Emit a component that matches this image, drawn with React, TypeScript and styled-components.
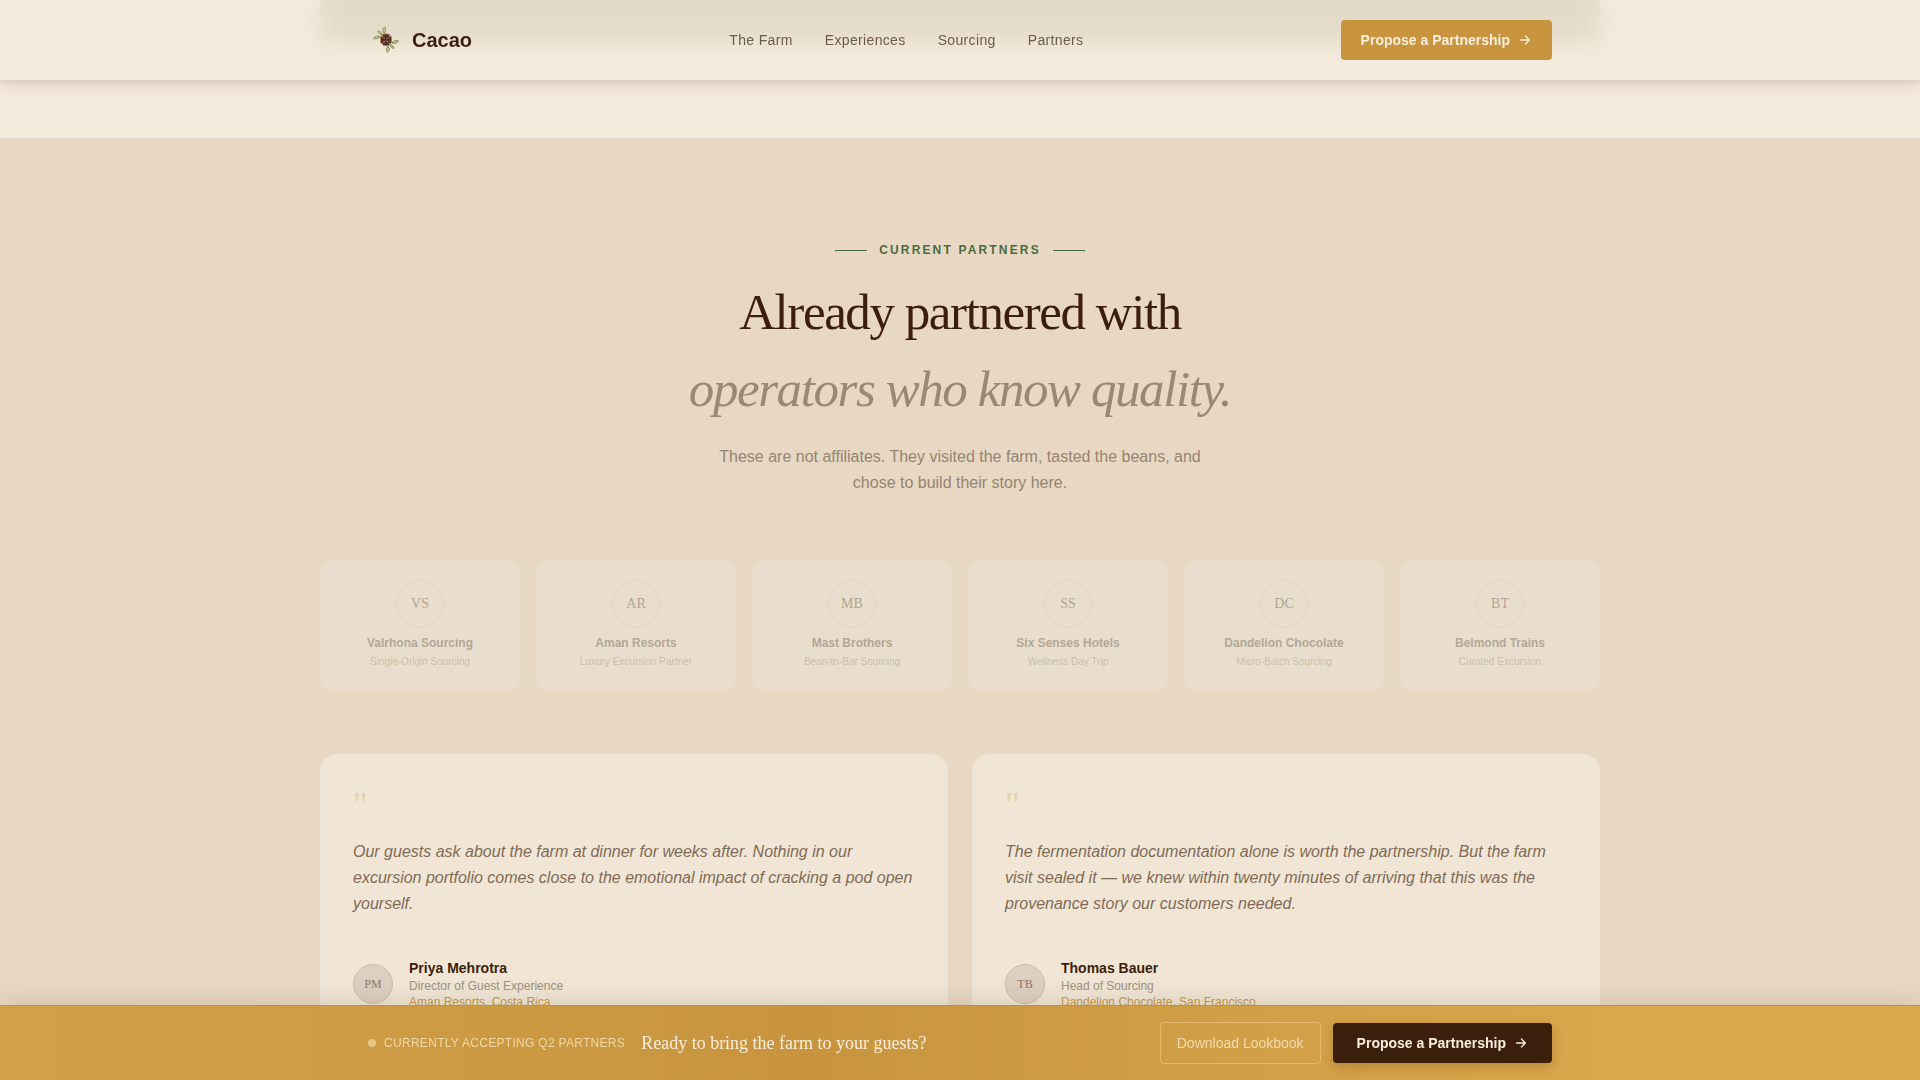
import React from "react";
import styled, { createGlobalStyle } from "styled-components";

const sans = '"Liberation Sans", Arial, sans-serif';
const serif = '"Liberation Serif", "Times New Roman", serif';

const GlobalStyle = createGlobalStyle`
  *, *::before, *::after { box-sizing: border-box; }
  html { scrollbar-width: none; }
  body {
    margin: 0;
    background: #f4eadc;
    color: #3b1f0c;
    font-family: ${sans};
  }
  h2, p, figure, blockquote, ul { margin: 0; padding: 0; }
  a { color: inherit; text-decoration: none; }
`;

const Header = styled.header`
  position: fixed;
  top: 0;
  left: 0;
  right: 0;
  z-index: 10;
  background: rgba(244, 235, 220, 0.8);
  backdrop-filter: blur(12px);
  border-bottom: 1px solid #e0d6c8;
  box-shadow: 0 2px 4px rgba(59, 31, 12, 0.08), 0 4px 16px rgba(59, 31, 12, 0.1);
`;

const Container = styled.div`
  max-width: 1280px;
  margin: 0 auto;
  padding: 0 48px;
`;

const HeaderRow = styled(Container)`
  display: flex;
  align-items: center;
  justify-content: space-between;
  height: 80px;
`;

const Brand = styled.a`
  display: flex;
  align-items: center;
  gap: 8px;
  font-size: 20px;
  font-weight: 700;
`;

const NavLinks = styled.nav`
  display: flex;
  gap: 32px;
  font-size: 14px;
  letter-spacing: 0.025em;
  color: #6d5a49;
`;

const Button = styled.button<{ $tone: "gold" | "dark" | "outline" }>`
  display: inline-flex;
  align-items: center;
  gap: 8px;
  height: ${(p) => (p.$tone === "outline" ? 42 : 40)}px;
  padding: 0 ${(p) => ({ gold: 20, dark: 24, outline: 16 })[p.$tone]}px;
  border: ${(p) => (p.$tone === "outline" ? "1px solid rgba(250, 225, 175, 0.4)" : "0")};
  border-radius: 4px;
  background: ${(p) => ({ gold: "#c8953e", dark: "#3b1f0c", outline: "transparent" })[p.$tone]};
  box-shadow: ${(p) => (p.$tone === "dark" ? "0 4px 12px rgba(59, 31, 12, 0.2)" : "none")};
  color: ${(p) => (p.$tone === "outline" ? "#f2dbb0" : "#f8eedd")};
  font-family: inherit;
  font-size: 14px;
  font-weight: ${(p) => (p.$tone === "outline" ? 400 : 700)};
  white-space: nowrap;
  cursor: pointer;
`;

const Intro = styled.section`
  padding: 0 24px 96px;
`;

const IntroPanel = styled.div`
  max-width: 1280px;
  height: 42px;
  margin: 0 auto;
  background: #a3957f;
`;

const Partners = styled.section`
  padding: 96px 24px 32px;
  background: #e8d8c3;
`;

const Inner = styled.div`
  max-width: 1280px;
  margin: 0 auto;
`;

const Eyebrow = styled.p`
  display: flex;
  align-items: center;
  justify-content: center;
  gap: 12px;
  font-size: 12px;
  line-height: 32px;
  font-weight: 700;
  letter-spacing: 0.18em;
  text-transform: uppercase;
  color: #4a6b3d;

  &::before,
  &::after {
    content: "";
    width: 32px;
    height: 1px;
    background: currentColor;
  }
`;

const Title = styled.h2`
  margin-top: 8px;
  font-family: ${serif};
  font-size: 51px;
  line-height: 77px;
  font-weight: 400;
  letter-spacing: -0.028em;
  text-align: center;

  em {
    display: block;
    color: #9b8870;
  }
`;

const Lead = styled.p`
  max-width: 520px;
  margin: 16px auto 0;
  font-size: 16px;
  line-height: 26px;
  text-align: center;
  color: #958470;
`;

const PartnerGrid = styled.ul`
  display: grid;
  grid-template-columns: repeat(6, 1fr);
  gap: 16px;
  margin-top: 64px;
  list-style: none;
`;

const PartnerCard = styled.li`
  display: flex;
  flex-direction: column;
  align-items: center;
  padding: 20px 16px;
  border-radius: 12px;
  background: #e9decd;
  box-shadow: 0 0 4px rgba(233, 222, 205, 0.8);
  text-align: center;
`;

const Monogram = styled.span`
  display: grid;
  place-items: center;
  width: 48px;
  height: 48px;
  border: 1px solid #e2d6c5;
  border-radius: 50%;
  font-family: ${serif};
  font-size: 14px;
  color: #b1a594;
`;

const PartnerName = styled.strong`
  margin-top: 6px;
  font-size: 12px;
  line-height: 18px;
  color: #b3a796;
`;

const PartnerKind = styled.span`
  margin-top: 2px;
  font-size: 10px;
  line-height: 16px;
  color: #cabeac;
`;

const Quotes = styled.div`
  display: grid;
  grid-template-columns: repeat(2, 1fr);
  gap: 24px;
  margin-top: 64px;
`;

const QuoteCard = styled.figure`
  padding: 32px;
  border: 1px solid #ebe4dc;
  border-radius: 16px;
  background: #f1e6d5;
`;

const QuoteMark = styled.div`
  font-family: ${serif};
  font-size: 36px;
  line-height: 36px;
  color: #e6d3a8;
`;

const QuoteText = styled.blockquote`
  margin-top: 16px;
  font-size: 16px;
  line-height: 26px;
  font-style: italic;
  color: #7f6b57;
`;

const Author = styled.figcaption`
  display: flex;
  align-items: center;
  gap: 16px;
  margin-top: 24px;
  padding-top: 16px;
  border-top: 1px solid #ebe3df;
`;

const Avatar = styled.span`
  display: grid;
  place-items: center;
  width: 40px;
  height: 40px;
  border: 1px solid #cabdad;
  border-radius: 50%;
  background: #ddd0c0;
  font-family: ${serif};
  font-size: 12px;
  color: #8c7a68;
`;

const AuthorText = styled.div`
  display: flex;
  flex-direction: column;
  font-size: 12px;
  line-height: 16px;
  color: #a09080;

  strong {
    font-size: 14px;
    line-height: 20px;
    color: #3b1f0c;
  }

  a {
    color: #c49a4a;
  }
`;

const CtaBar = styled.aside`
  position: fixed;
  left: 0;
  right: 0;
  bottom: 0;
  z-index: 10;
  border-top: 1px solid #c1913f;
  background: linear-gradient(90deg, #d1a148, #c8953e 42%, #d9a84c 85%);
  box-shadow: 0 -4px 24px rgba(59, 31, 12, 0.12);
`;

const CtaRow = styled(Container)`
  display: flex;
  align-items: center;
  justify-content: space-between;
  padding-top: 16px;
  padding-bottom: 16px;
`;

const CtaGroup = styled.div<{ $gap: number }>`
  display: flex;
  align-items: center;
  gap: ${(p) => p.$gap}px;
`;

const Status = styled.span`
  display: flex;
  align-items: center;
  gap: 8px;
  font-size: 12px;
  letter-spacing: 0.025em;
  text-transform: uppercase;
  color: #f0d8a8;

  &::before {
    content: "";
    width: 8px;
    height: 8px;
    border-radius: 50%;
    background: #e4c685;
  }
`;

const CtaText = styled.p`
  font-family: ${serif};
  font-size: 18px;
  color: #f8eedd;
`;

const Arrow = () => (
  <svg width="14" height="14" viewBox="0 0 16 16" fill="none" stroke="currentColor" strokeWidth="1.5" strokeLinecap="round" strokeLinejoin="round" aria-hidden="true">
    <path d="M3 8h10M8.5 3.5L13 8l-4.5 4.5" />
  </svg>
);

const Leaves = () => (
  <g stroke="#7f8a4a" strokeWidth="0.9" fill="#c3c893" strokeLinecap="round">
    <path d="M17 13c-.6-2-.8-3-.6-4" fill="none" />
    <path d="M16 11c-2-2-1.500-4.500.6-6 1.600 2 1.400 4.500-.6 6z" />
    <path d="M15 13.500l-2-2" fill="none" />
    <path d="M13.800 12.500c-2.300.1-3.600-1.400-3.800-3.500 2.300.2 3.600 1.400 3.800 3.500z" />
    <path d="M13 16.500l-2-1.500" fill="none" />
    <path d="M11.500 14.500c-.8 2.300-3.400 2.900-6 2.100 1-2.400 3.600-3.200 6-2.100z" />
  </g>
);

const Logo = () => (
  <svg width="36" height="36" viewBox="0 0 36 36" aria-hidden="true">
    <Leaves />
    <g transform="rotate(180 18 17.700)">
      <Leaves />
    </g>
    <path d="M15.500 12h5l3 3v5.500l-3 3h-5l-3-3V15z" fill="#5d3a30" stroke="#a98252" strokeWidth="0.9" />
    <path d="M14 14l8 8M22 14l-8 8" stroke="#d9b79a" strokeWidth="0.8" strokeDasharray="1.400 1" />
    <path d="M18 12.500v10.500M13 17.700h10" stroke="#3b1f18" strokeWidth="1" strokeDasharray="2 1" />
  </svg>
);

const links = ["The Farm", "Experiences", "Sourcing", "Partners"];

const partners = [
  ["VS", "Valrhona Sourcing", "Single-Origin Sourcing"],
  ["AR", "Aman Resorts", "Luxury Excursion Partner"],
  ["MB", "Mast Brothers", "Bean-to-Bar Sourcing"],
  ["SS", "Six Senses Hotels", "Wellness Day Trip"],
  ["DC", "Dandelion Chocolate", "Micro-Batch Sourcing"],
  ["BT", "Belmond Trains", "Curated Excursion"],
];

const quotes = [
  {
    text: "Our guests ask about the farm at dinner for weeks after. Nothing in our excursion portfolio comes close to the emotional impact of cracking a pod open yourself.",
    initials: "PM",
    name: "Priya Mehrotra",
    role: "Director of Guest Experience",
    org: "Aman Resorts, Costa Rica",
  },
  {
    text: "The fermentation documentation alone is worth the partnership. But the farm visit sealed it — we knew within twenty minutes of arriving that this was the provenance story our customers needed.",
    initials: "TB",
    name: "Thomas Bauer",
    role: "Head of Sourcing",
    org: "Dandelion Chocolate, San Francisco",
  },
];

export default function App() {
  return (
    <>
      <GlobalStyle />
      <Header>
        <HeaderRow>
          <Brand href="#">
            <Logo />
            Cacao
          </Brand>
          <NavLinks>
            {links.map((label) => (
              <a key={label} href="#">
                {label}
              </a>
            ))}
          </NavLinks>
          <Button $tone="gold">
            Propose a Partnership <Arrow />
          </Button>
        </HeaderRow>
      </Header>
      <main>
        <Intro>
          <IntroPanel />
        </Intro>
        <Partners>
          <Inner>
            <Eyebrow>Current Partners</Eyebrow>
            <Title>
              Already partnered with <em>operators who know quality.</em>
            </Title>
            <Lead>
              These are not affiliates. They visited the farm, tasted the beans, and chose to build their story here.
            </Lead>
            <PartnerGrid>
              {partners.map(([initials, name, kind]) => (
                <PartnerCard key={name}>
                  <Monogram>{initials}</Monogram>
                  <PartnerName>{name}</PartnerName>
                  <PartnerKind>{kind}</PartnerKind>
                </PartnerCard>
              ))}
            </PartnerGrid>
            <Quotes>
              {quotes.map((q) => (
                <QuoteCard key={q.name}>
                  <QuoteMark>"</QuoteMark>
                  <QuoteText>{q.text}</QuoteText>
                  <Author>
                    <Avatar>{q.initials}</Avatar>
                    <AuthorText>
                      <strong>{q.name}</strong>
                      <span>{q.role}</span>
                      <a href="#">{q.org}</a>
                    </AuthorText>
                  </Author>
                </QuoteCard>
              ))}
            </Quotes>
          </Inner>
        </Partners>
      </main>
      <CtaBar>
        <CtaRow>
          <CtaGroup $gap={16}>
            <Status>Currently accepting Q2 partners</Status>
            <CtaText>Ready to bring the farm to your guests?</CtaText>
          </CtaGroup>
          <CtaGroup $gap={12}>
            <Button $tone="outline">Download Lookbook</Button>
            <Button $tone="dark">
              Propose a Partnership <Arrow />
            </Button>
          </CtaGroup>
        </CtaRow>
      </CtaBar>
    </>
  );
}
